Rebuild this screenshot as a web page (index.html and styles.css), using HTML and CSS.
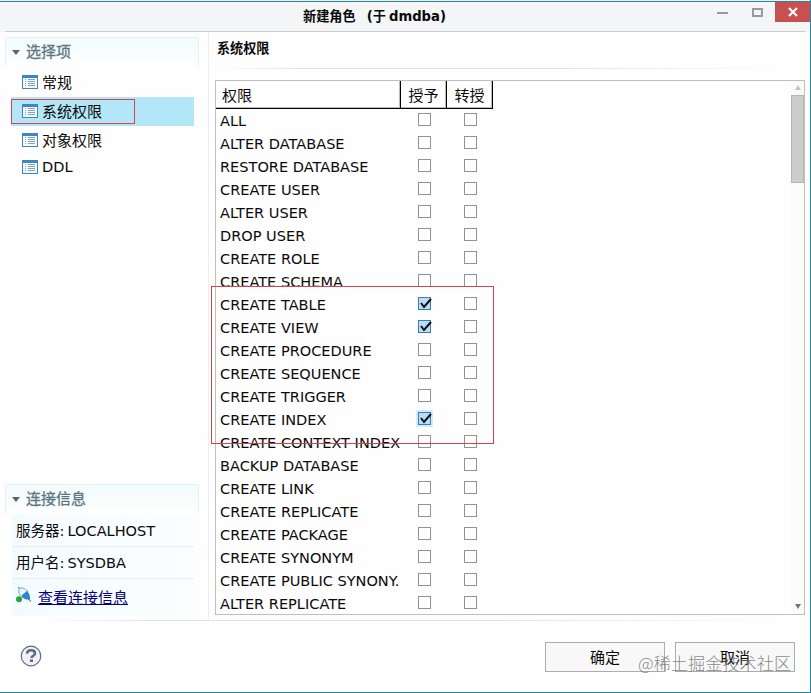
FILE: index.html
```html
<!DOCTYPE html>
<html lang="zh-CN">
<head>
<meta charset="utf-8">
<title>新建角色 (于 dmdba)</title>
<link rel="stylesheet" href="styles.css">
</head>
<body>
<svg class="defs" width="0" height="0">
  <symbol id="list" viewBox="0 0 16 14">
    <path fill="#3c86c6" d="M0 0h16v14H0z"/><path fill="#f4fafe" d="M1 3h14v10H1z"/>
    <path stroke="#8ba0b5" d="M3 4.500h1M6 4.500h7M3 6.500h1M6 6.500h7M3 8.500h1M6 8.500h7M3 10.500h1M6 10.500h7"/>
  </symbol>
</svg>
<div class="window">
  <header class="titlebar">
    <h1 class="title"><span>新建角色</span><span class="owner"><span>(于</span><span>dmdba)</span></span></h1>
    <div class="controls">
      <svg width="67" height="20" viewBox="0 0 67 20"><path fill="#9a9a9a" d="M0 10h11v2H0z"/><path fill="none" stroke="#9a9a9a" stroke-width="2" d="M36 7h9v7h-9z"/></svg>
      <span class="close"><svg width="10" height="10" viewBox="0 0 10 10"><path stroke="#fff" stroke-width="2.200" d="M1 1l8 8M9 1L1 9"/></svg></span>
    </div>
  </header>
  <main class="body">
    <aside class="sidebar">
      <section>
        <h2 class="section-title"><i class="twistie"></i>选择项</h2>
        <ul class="nav">
          <li><svg width="16" height="14"><use href="#list"/></svg>常规</li>
          <li class="selected"><svg width="16" height="14"><use href="#list"/></svg>系统权限<b class="nav-mark"></b></li>
          <li><svg width="16" height="14"><use href="#list"/></svg>对象权限</li>
          <li class="latin"><svg width="16" height="14"><use href="#list"/></svg>DDL</li>
        </ul>
      </section>
      <section class="connection">
        <h2 class="section-title"><i class="twistie"></i>连接信息</h2>
        <div class="info"><span>服务器:</span><span>LOCALHOST</span></div>
        <div class="info"><span>用户名:</span><span>SYSDBA</span></div>
        <div class="info link-row">
          <svg width="16" height="17" viewBox="0 0 16 17"><path d="M2 1l2 2M12 12.500l3 3" stroke="#5b9fd4" stroke-width="1.300"/><path d="M3.500 2.500C7 1 10 3 12 6L6 11.500C3 9 2 5.500 3.500 2.500z" fill="#eaf6ff" stroke="#6ba8dc"/><path d="M5.500 9.500l5.500-4.500c2.500 2.500 3.500 5.500 3 8.500-4 .500-7-.500-8.500-4z" fill="#3184cc"/><circle cx="3" cy="13.200" r="3" fill="#22a637"/></svg>
          <a>查看连接信息</a>
        </div>
      </section>
    </aside>
    <section class="content">
      <h2 class="page-title">系统权限</h2>
      <div class="table-box">
        <div class="table">
          <div class="thead"><span>权限</span><span>授予</span><span>转授</span></div>
          <div class="row"><span>ALL</span><i></i><i></i></div>
          <div class="row"><span>ALTER DATABASE</span><i></i><i></i></div>
          <div class="row"><span>RESTORE DATABASE</span><i></i><i></i></div>
          <div class="row"><span>CREATE USER</span><i></i><i></i></div>
          <div class="row"><span>ALTER USER</span><i></i><i></i></div>
          <div class="row"><span>DROP USER</span><i></i><i></i></div>
          <div class="row"><span>CREATE ROLE</span><i></i><i></i></div>
          <div class="row"><span>CREATE SCHEMA</span><i></i><i></i></div>
          <div class="row"><span>CREATE TABLE</span><i class="on"><svg viewBox="0 0 13 13"><path d="M3 6l3 4 7-8"/></svg></i><i></i></div>
          <div class="row"><span>CREATE VIEW</span><i class="on"><svg viewBox="0 0 13 13"><path d="M3 6l3 4 7-8"/></svg></i><i></i></div>
          <div class="row"><span>CREATE PROCEDURE</span><i></i><i></i></div>
          <div class="row"><span>CREATE SEQUENCE</span><i></i><i></i></div>
          <div class="row"><span>CREATE TRIGGER</span><i></i><i></i></div>
          <div class="row"><span>CREATE INDEX</span><i class="on focus"><svg viewBox="0 0 13 13"><path d="M3 6l3 4 7-8"/></svg></i><i></i></div>
          <div class="row"><span>CREATE CONTEXT INDEX</span><i></i><i></i></div>
          <div class="row"><span>BACKUP DATABASE</span><i></i><i></i></div>
          <div class="row"><span>CREATE LINK</span><i></i><i></i></div>
          <div class="row"><span>CREATE REPLICATE</span><i></i><i></i></div>
          <div class="row"><span>CREATE PACKAGE</span><i></i><i></i></div>
          <div class="row"><span>CREATE SYNONYM</span><i></i><i></i></div>
          <div class="row"><span>CREATE PUBLIC SYNONY.</span><i></i><i></i></div>
          <div class="row"><span>ALTER REPLICATE</span><i></i><i></i></div>
        </div>
        <div class="scrollbar"><i class="up"></i><i class="thumb"></i><i class="down"></i></div>
        <b class="table-mark"></b>
      </div>
    </section>
  </main>
  <footer class="footer">
    <svg width="22" height="22" viewBox="0 0 22 22"><circle cx="11" cy="11" r="9.800" fill="#f0f2f6" stroke="#626a76" stroke-width="1.200"/><path d="M7 8.600C7.300 6 9 5.300 11 5.300c2.300 0 4 1 4 3.100 0 2.400-3.500 2.300-3.500 4.600" fill="none" stroke="#5f6b86" stroke-width="2.600"/><path fill="#5f6b86" d="M10 14.500h3V17h-3z"/></svg>
    <div class="buttons"><span class="button">确定</span><span class="button">取消</span></div>
    <span class="watermark">@稀土掘金技术社区</span>
  </footer>
</div>
</body>
</html>
```

FILE: styles.css
```css
* { box-sizing: border-box; }
body { margin: 0; background: #fefefe; color: #0a0a0a; font: 14.54px/23px "DejaVu Sans", "Noto Sans CJK SC", sans-serif; }
h1, h2, ul { margin: 0; padding: 0; list-style: none; }
svg { display: block; flex: none; }
.defs { position: absolute; }
.window { width: 811px; height: 693px; overflow: hidden; display: flex; flex-direction: column; border: solid #2f809b; border-width: 0 1px 1px 0; }
.titlebar { height: 32px; flex: none; display: flex; justify-content: flex-end; position: relative; border-top: 1px solid #e4f1f3; background: linear-gradient(#2f8292 1px, #f3f5f6 1px); }
.titlebar::after { content: ""; position: absolute; left: 5px; right: 5px; bottom: 0; height: 1px; background: #cacccd; }
.title { position: absolute; left: 303px; top: 4px; display: flex; gap: 11px; font-size: 13.2px; font-weight: 700; }
.owner { display: flex; gap: 3px; }
.controls { display: flex; padding-top: 1px; }
.controls > svg { margin-right: -9px; }
.close { width: 35px; height: 20px; background: #c75050; display: grid; place-items: center; }
.body { height: 589px; flex: none; display: flex; }
.sidebar { width: 209px; padding: 5px 9px 5px 5px; display: flex; flex-direction: column; justify-content: space-between; border-right: 1px solid #eee; }
.section-title { height: 29px; padding-left: 6px; display: flex; align-items: center; gap: 6px; border: solid #e5f2f5; border-width: 1px 1px 0; border-radius: 3px 3px 0 0; background: linear-gradient(#f2fbfe, #fefefe); color: #5c7780; font-size: 15px; font-weight: 400; -webkit-text-stroke: .3px #5c7780; }
.twistie { border: 4px solid transparent; border-top: 5px solid #586468; border-bottom: 0; }
.nav { margin: 2px 5px 0 6px; font-size: 15px; }
.nav li { height: 29px; padding: 1px 0 0 11px; display: flex; align-items: center; gap: 4px; position: relative; }
.nav li svg { margin-top: -3px; }
.nav .selected { background: #b3e6f7; }
.nav .latin { height: 25px; padding-top: 0; font-size: 14.54px; }
.nav .latin svg { margin-top: -1px; }
.nav-mark { position: absolute; left: 0; top: 2px; width: 124px; height: 25px; border: 1px solid #d4444e; }
.connection { height: 132px; }
.info { height: 32px; margin: 0 5px 0 7px; padding: 2px 0 0 4px; display: flex; align-items: center; gap: 3px; border-bottom: 1px solid #e6eef0; background: linear-gradient(90deg, #f4fbfe, #fbfeff); font-size: 14.54px; }
.connection .section-title { margin-bottom: 2px; }
.link-row { height: 37px; padding-top: 1px; gap: 6px; border: 0; font-size: 15px; }
.link-row svg { margin-top: -8px; }
.info a { color: #000080; text-decoration: underline; }
.content { flex: 1; padding: 5px 5px 5px 6px; }
.page-title { height: 43px; padding-left: 2px; font-size: 13.1px; position: relative; }
.page-title::after { content: ""; position: absolute; left: 0; right: 20px; bottom: 11px; height: 1px; background: linear-gradient(90deg, transparent, #e2e2e2 15% 60%, transparent); }
.table-box { height: 535px; display: flex; justify-content: space-between; border: 1px solid #bfbfbf; position: relative; }
.table { width: 277px; overflow: hidden; }
.thead, .row { display: grid; grid-template-columns: 185px 46px 46px; }
.thead { height: 28px; border-bottom: 1px solid #000; line-height: 30px; font-size: 15px; }
.thead span { height: 27px; border-right: 1px solid #000; box-shadow: inset -1px -1px #bbb; text-align: center; }
.thead span:first-child { text-align: left; padding-left: 6px; }
.row { height: 23px; justify-items: center; }
.row span { width: 185px; padding: 0 0 0 4px; line-height: 24px; white-space: nowrap; overflow: hidden; }
.row i { width: 13px; height: 13px; margin: 4px 0 0 1px; border: 1px solid #929292; background: #fff; }
.row .on { border-color: #3a7bb5; background: #bddcf8; }
.row .focus { box-shadow: 0 0 0 2px #cdeefb; }
.on svg { width: 13px; height: 13px; margin: -1px; overflow: visible; fill: none; stroke: #111; stroke-width: 2; }
.scrollbar { width: 13px; height: 533px; display: flex; flex-direction: column; align-items: center; background: #fbfbfb; }
.up, .down { border: 3px solid transparent; }
.up { border-bottom: 5px solid #c2c2c2; border-top: 0; margin: 4px 0 5px; }
.thumb { height: 88px; align-self: stretch; background: #cdcdcd; border: 1px solid #b5b5b5; }
.down { border-top: 5px solid #777; border-bottom: 0; margin: auto 0 5px; }
.table-mark { position: absolute; left: -5px; top: 205px; width: 283px; height: 158px; border: 1px solid #cc4650; }
.footer { height: 71px; display: flex; justify-content: space-between; padding: 21px 15px 0 20px; position: relative; }
.footer::before { content: ""; position: absolute; left: 40px; right: 20px; top: -1px; height: 1px; background: linear-gradient(90deg, transparent, #e2e2e2 15% 60%, transparent); }
.footer > svg { margin-top: 3px; }
.buttons { display: flex; gap: 10px; }
.button { width: 120px; height: 30px; border: 1px solid #adadad; background: #f8f8f8; text-align: center; line-height: 31px; font-size: 15px; }
.watermark { position: absolute; left: 638px; top: 30px; color: rgba(105,105,105,.8); font-size: 17.2px; font-family: "Noto Sans CJK SC", sans-serif; font-weight: 300; white-space: nowrap; }
```
